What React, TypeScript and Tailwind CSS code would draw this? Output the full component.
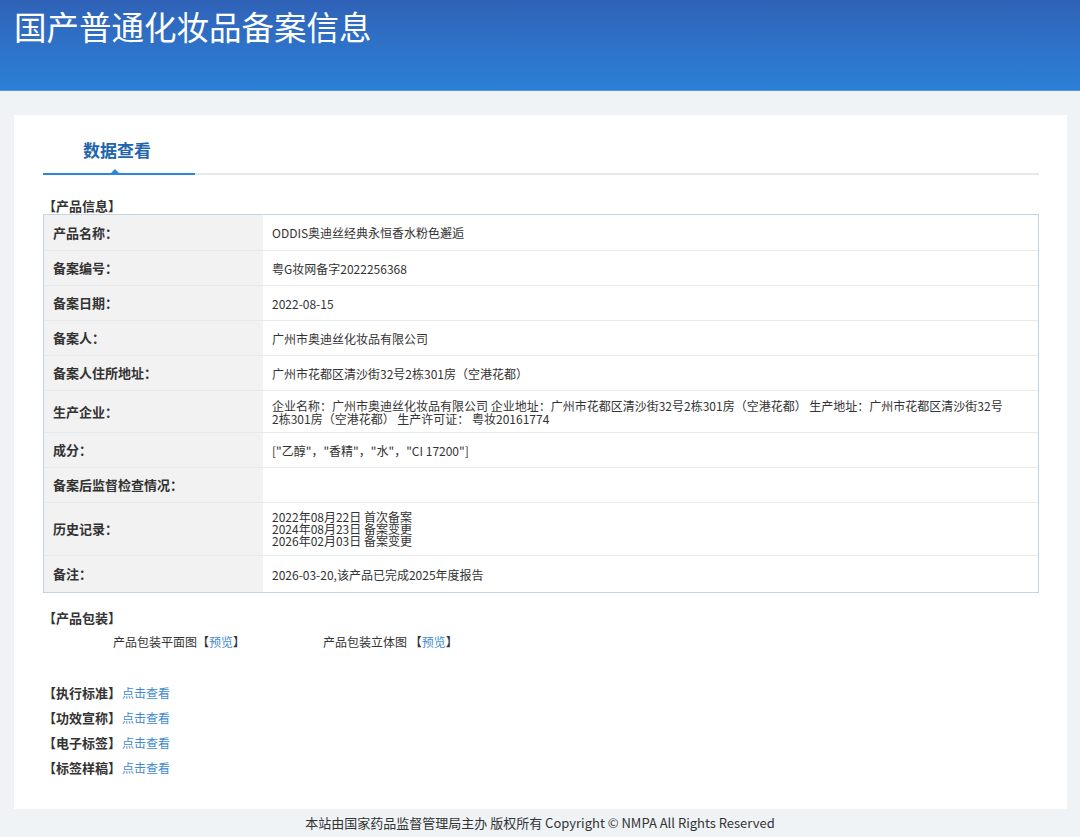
import React from "react";

const ROWS: { label: string; value: React.ReactNode; h: string }[] = [
  { label: "产品名称：", value: "ODDIS奥迪丝经典永恒香水粉色邂逅", h: "h-[36px]" },
  { label: "备案编号：", value: "粤G妆网备字2022256368", h: "h-[35px]" },
  { label: "备案日期：", value: "2022-08-15", h: "h-[35px]" },
  { label: "备案人：", value: "广州市奥迪丝化妆品有限公司", h: "h-[35px]" },
  { label: "备案人住所地址：", value: "广州市花都区清沙街32号2栋301房（空港花都）", h: "h-[35px]" },
  {
    label: "生产企业：",
    value:
      "企业名称：广州市奥迪丝化妆品有限公司 企业地址：广州市花都区清沙街32号2栋301房（空港花都） 生产地址：广州市花都区清沙街32号2栋301房（空港花都） 生产许可证： 粤妆20161774",
    h: "h-[42px]",
  },
  { label: "成分：", value: '["乙醇"，"香精"，"水"，"CI 17200"]', h: "h-[35px]" },
  { label: "备案后监督检查情况：", value: "", h: "h-[35px]" },
  {
    label: "历史记录：",
    value: (
      <div className="leading-[12px]">
        <div>2022年08月22日 首次备案</div>
        <div>2024年08月23日 备案变更</div>
        <div>2026年02月03日 备案变更</div>
      </div>
    ),
    h: "h-[53px]",
  },
  { label: "备注：", value: "2026-03-20,该产品已完成2025年度报告", h: "h-[36px]" },
];

const LINKS = ["执行标准", "功效宣称", "电子标签", "标签样稿"];

export default function App() {
  return (
    <div className="min-h-[837px] bg-[#eff3f6] text-[12px] text-[#333] font-['Noto_Sans_CJK_SC','Noto_Sans',sans-serif]">
      {/* header */}
      <div className="h-[91px] border-b border-[#4a9be0] bg-gradient-to-b from-[#2f62b6] via-[#2e72c8] to-[#2a80d6] px-[14px] pt-[3px]">
        <h1 className="text-[32.5px] leading-[46px] font-normal text-white">国产普通化妆品备案信息</h1>
      </div>

      <div className="pl-[14px] pr-[13px] pt-[24px]">
        <div className="bg-white pl-[29px] pr-[28px] pt-[22px] pb-[26px] h-[694px]">
          {/* tab */}
          <div className="relative flex border-b-2 border-[#e6e8ea]">
            <div className="relative w-[152px] -mb-[2px] border-b-2 border-[#2b88d8] pl-[40px] pb-[10px] text-[17px] font-bold leading-[26px] text-[#2065ab]">
              数据查看
              <span className="absolute left-[66px] -bottom-[2px] h-0 w-0 border-x-[6px] border-b-[6px] border-x-transparent border-b-[#2b88d8]" />
            </div>
          </div>

          <div className="mt-[22px] font-bold leading-[17px] text-[13px]">【产品信息】</div>
          <div className="border border-[#c6d3e2]">
            {ROWS.map((r, i) => (
              <div
                key={r.label}
                className={`flex ${r.h} ${i < ROWS.length - 1 ? "border-b border-[#e7eaed]" : ""}`}
              >
                <div className="flex w-[219px] shrink-0 items-center bg-[#f2f2f2] pl-[9px] text-[13px] font-bold">
                  {r.label}
                </div>
                <div className="flex flex-1 items-center pl-[9px] pr-[34px] leading-[13px]">{r.value}</div>
              </div>
            ))}
          </div>

          <div className="mt-[16px] font-bold leading-[17px] text-[13px]">【产品包装】</div>
          <div className="mt-[7px] flex pl-[70px] leading-[17px]">
            <div className="w-[210px]">
              产品包装平面图【<span className="text-[#3f8ad0]">预览</span>】
            </div>
            <div>
              产品包装立体图 【<span className="text-[#3f8ad0]">预览</span>】
            </div>
          </div>

          <div className="mt-[34px] flex flex-col gap-[8px]">
            {LINKS.map((l) => (
              <div key={l} className="flex items-baseline gap-[1px] whitespace-nowrap leading-[17px]">
                <span className="text-[13px] font-bold">【{l}】</span>
                <span className="text-[#3f8ad0]">点击查看</span>
              </div>
            ))}
          </div>
        </div>
      </div>

      <div className="py-[5px] text-center text-[13px] leading-[17px]">
        本站由国家药品监督管理局主办 版权所有 Copyright © NMPA All Rights Reserved
      </div>
    </div>
  );
}
